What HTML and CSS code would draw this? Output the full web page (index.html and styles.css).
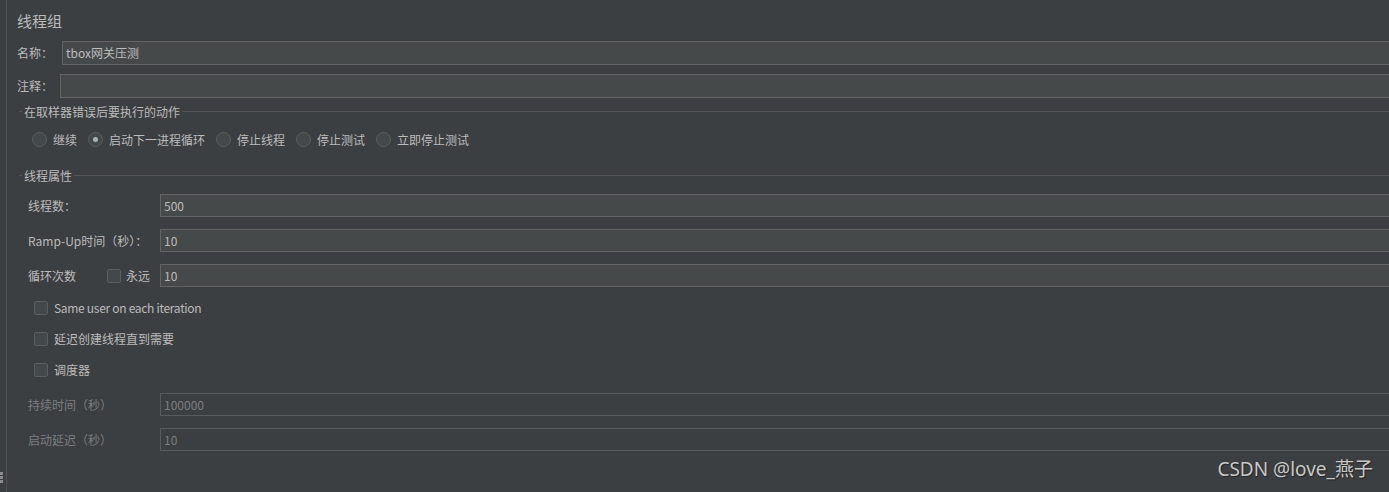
FILE: index.html
```html
<!DOCTYPE html>
<html lang="zh">
<head>
  <meta charset="UTF-8">
  <title>线程组</title>
  <link rel="stylesheet" href="styles.css">
</head>
<body>
  <div class="panel">
    <h1 class="title">线程组</h1>

    <div class="row name-row">
      <label class="lbl name-lbl">名称：</label>
      <div class="field">tbox网关压测</div>
    </div>
    <div class="row comment-row">
      <label class="lbl comment-lbl">注释：</label>
      <div class="field"></div>
    </div>

    <div class="legend group-error"><span>在取样器错误后要执行的动作</span></div>
    <div class="radios">
      <span class="radio"></span><span class="opt">继续</span>
      <span class="radio checked"></span><span class="opt">启动下一进程循环</span>
      <span class="radio"></span><span class="opt">停止线程</span>
      <span class="radio"></span><span class="opt">停止测试</span>
      <span class="radio"></span><span class="opt">立即停止测试</span>
    </div>

    <div class="legend group-props"><span>线程属性</span></div>
    <div class="props">
      <div class="row prop">
        <label class="lbl prop-lbl">线程数：</label>
        <div class="field">500</div>
      </div>
      <div class="row prop">
        <label class="lbl prop-lbl">Ramp-Up时间（秒）：</label>
        <div class="field">10</div>
      </div>
      <div class="row prop">
        <label class="lbl loop-lbl">循环次数</label>
        <span class="check forever"></span><span class="forever-txt">永远</span>
        <div class="field">10</div>
      </div>

      <div class="checks">
        <div class="check-row"><span class="check"></span><span class="ctext latin">Same user on each iteration</span></div>
        <div class="check-row"><span class="check"></span><span class="ctext">延迟创建线程直到需要</span></div>
        <div class="check-row"><span class="check"></span><span class="ctext">调度器</span></div>
      </div>

      <div class="row prop disabled">
        <label class="lbl prop-lbl">持续时间（秒）</label>
        <div class="field">100000</div>
      </div>
      <div class="row prop disabled">
        <label class="lbl prop-lbl">启动延迟（秒）</label>
        <div class="field">10</div>
      </div>
    </div>
  </div>

  <div class="grip"><i></i><i></i><i></i></div>
  <div class="watermark">CSDN @love_燕子</div>
</body>
</html>
```

FILE: styles.css
```css
* { margin: 0; padding: 0; box-sizing: border-box; }
html, body {
  width: 1389px;
  height: 492px;
  overflow: hidden;
}
body {
  font-family: "Noto Sans CJK SC", "Noto Sans", sans-serif;
  font-size: 12px;
  background: #3c3f41;
  color: #bbbbbb;
  position: relative;
}
.panel {
  margin-left: 6px;
  height: 492px;
  border-left: 1px solid #515151;
  padding-left: 10px;
}
.title {
  font-size: 15px;
  font-weight: normal;
  line-height: 20px;
  padding-top: 11px;
  height: 41px;
}
.row {
  display: flex;
  align-items: center;
  height: 24px;
}
.lbl {
  flex: none;
  line-height: 24px;
}
.name-lbl { width: 45px; }
.comment-lbl { width: 43px; }
.comment-row { margin-top: 9px; }
.field {
  flex: 1;
  height: 100%;
  margin-right: -4px;
  background: #45494a;
  border: 1px solid #646464;
  padding-left: 3px;
  line-height: 21px;
  white-space: nowrap;
}
.legend {
  display: flex;
  align-items: center;
  height: 14px;
  margin-left: 2px;
  margin-right: -4px;
}
.legend::before {
  content: "";
  width: 3px;
  border-top: 1px solid #555555;
  margin-right: 2px;
}
.legend::after {
  content: "";
  flex: 1;
  border-top: 1px solid #555555;
  margin-left: 2px;
}
.group-error { margin-top: 6px; }
.radios {
  display: flex;
  align-items: center;
  height: 28px;
  margin-top: 7px;
  padding-left: 15px;
}
.radio {
  width: 15px;
  height: 15px;
  border-radius: 50%;
  border: 1px solid #5b5e5f;
  background: #43494a;
  margin-right: 6px;
  display: flex;
  align-items: center;
  justify-content: center;
}
.radio.checked::after {
  content: "";
  width: 5px;
  height: 5px;
  border-radius: 50%;
  background: #a9b0b2;
}
.opt { margin-right: 11px; }
.group-props { margin-top: 15px; }
.props {
  padding-left: 11px;
  margin-top: 12px;
}
.prop {
  height: 23px;
  margin-bottom: 12px;
}
.prop-lbl { width: 132px; }
.loop-lbl { width: 79px; }
.check {
  flex: none;
  width: 14px;
  height: 14px;
  border: 1px solid #5b5e5f;
  border-radius: 2px;
  background: #43494a;
}
.forever { margin-right: 5px; }
.forever-txt { width: 34px; flex: none; }
.checks {
  padding-left: 6px;
  margin-top: -7px;
  margin-bottom: 8px;
}
.check-row {
  display: flex;
  align-items: center;
  height: 31px;
}
.check-row .check { margin-right: 6px; }
.latin { letter-spacing: -0.3px; }
.disabled .lbl,
.disabled .field {
  color: #7a7d7f;
}
.disabled .field {
  background: #3c3f41;
  border-color: #585b5d;
}
.grip {
  position: absolute;
  left: 0;
  top: 472px;
  display: flex;
  flex-direction: column;
  gap: 1px;
}
.grip i {
  display: block;
  width: 3px;
  height: 3px;
  background: #8c8c8c;
}
.watermark {
  position: absolute;
  right: 16px;
  bottom: 10px;
  font-family: "Noto Sans", "Noto Sans CJK SC", sans-serif;
  font-size: 19px;
  color: #c8c8c8;
  text-shadow: 1px 1px 1px #222;
}
```
